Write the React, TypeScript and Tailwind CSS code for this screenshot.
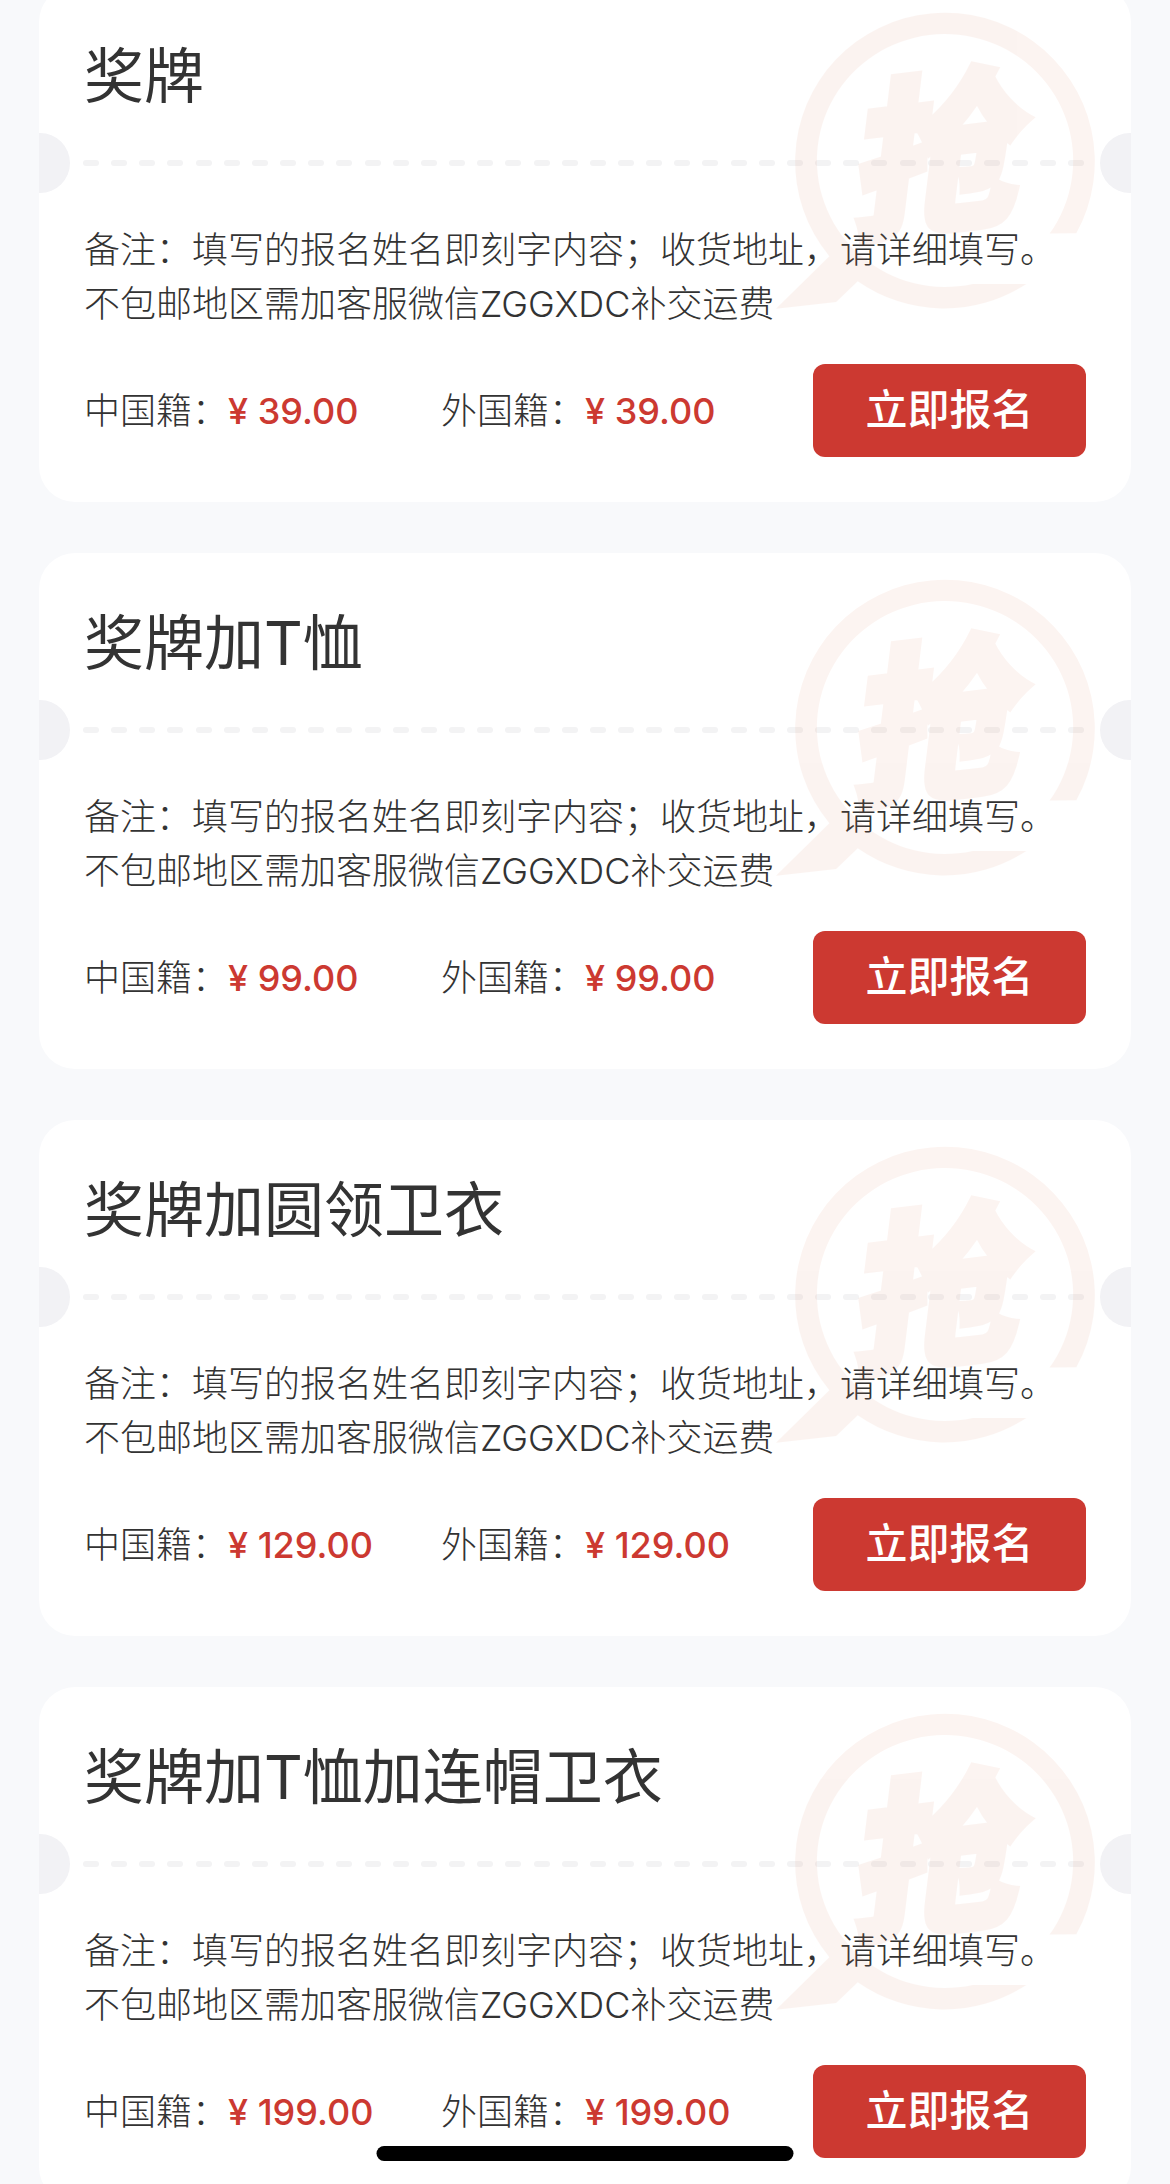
const TICKETS = [
  { id: 1, title: '奖牌', price: '39.00' },
  { id: 2, title: '奖牌加T恤', price: '99.00' },
  { id: 3, title: '奖牌加圆领卫衣', price: '129.00' },
  { id: 4, title: '奖牌加T恤加连帽卫衣', price: '199.00' },
];

const REMARK =
  '备注：填写的报名姓名即刻字内容；收货地址，请详细填写。不包邮地区需加客服微信ZGGXDC补交运费';

const DASHES = Array.from({ length: 36 }, (_, i) => i);

// Speech-bubble stamp in the top right corner of each card.
function Stamp() {
  return (
    <svg
      viewBox="50 58 956 892"
      aria-hidden="true"
      className="pointer-events-none absolute top-[25px] right-9 w-[319px] overflow-visible"
    >
      <g fill="#da7550" opacity="0.08">
        <path d="M50 950L210 793A449 446 0 1 1 950 724L870 725A384 379 0 1 0 640 876L800 876A449 446 0 0 1 295 868L230 930Z" />
        <text
          x="250"
          y="676"
          fontSize="510"
          fontWeight="900"
          fontStyle="italic"
          fontFamily="'Noto Sans CJK SC', sans-serif"
          stroke="#da7550"
          strokeWidth="20"
          transform="rotate(-7 556 504)"
        >
          抢
        </text>
      </g>
    </svg>
  );
}

function Divider() {
  return (
    <div className="mt-[15px] flex h-[60px] items-center justify-between">
      <span className="h-[60px] w-[31px] rounded-r-full bg-[#f2f2f5]" />
      <div className="mr-[15px] ml-[13px] flex flex-1 justify-between">
        {DASHES.map((i) => (
          <span key={i} className="h-[6px] w-4 rounded-full bg-[#f3f3f4]" />
        ))}
      </div>
      <span className="h-[60px] w-[31px] rounded-l-full bg-[#f2f2f5]" />
    </div>
  );
}

function Price({ label, value }: { label: string; value: string }) {
  return (
    <p className="min-w-[357px] text-[36px] leading-[54px] font-light">
      {label}：
      <span className="font-medium text-[#cc3931]">¥ {value}</span>
    </p>
  );
}

function TicketCard({ title, price }: { title: string; price: string }) {
  return (
    <li className="relative overflow-hidden rounded-[36px] bg-white pt-12 pb-[45px]">
      <h2 className="px-[45px] text-[60px] leading-[84px] font-normal">{title}</h2>
      <Divider />
      <p className="mt-[30px] px-[45px] text-[36px] leading-[54px] font-light">
        {REMARK}
      </p>
      <div className="mt-[33px] flex items-center px-[45px]">
        <Price label="中国籍" value={price} />
        <Price label="外国籍" value={price} />
        <button
          type="button"
          className="ml-auto h-[93px] w-[273px] shrink-0 rounded-xl bg-[#cc3931] pb-0.5 text-[42px] font-medium text-white"
        >
          立即报名
        </button>
      </div>
      <Stamp />
    </li>
  );
}

export default function App() {
  return (
    <div className="h-screen overflow-y-auto bg-[#f8f9fb] font-['Inter','Noto_Sans_CJK_SC',sans-serif] text-[#333] [scrollbar-width:none]">
      <ul className="mx-[39px] -mt-[14px] flex flex-col gap-[51px]">
        {TICKETS.map((t) => (
          <TicketCard key={t.id} title={t.title} price={t.price} />
        ))}
      </ul>
      {/* Home indicator */}
      <div className="fixed bottom-[23px] left-1/2 h-[15px] w-[417px] -translate-x-1/2 rounded-full bg-black" />
    </div>
  );
}
